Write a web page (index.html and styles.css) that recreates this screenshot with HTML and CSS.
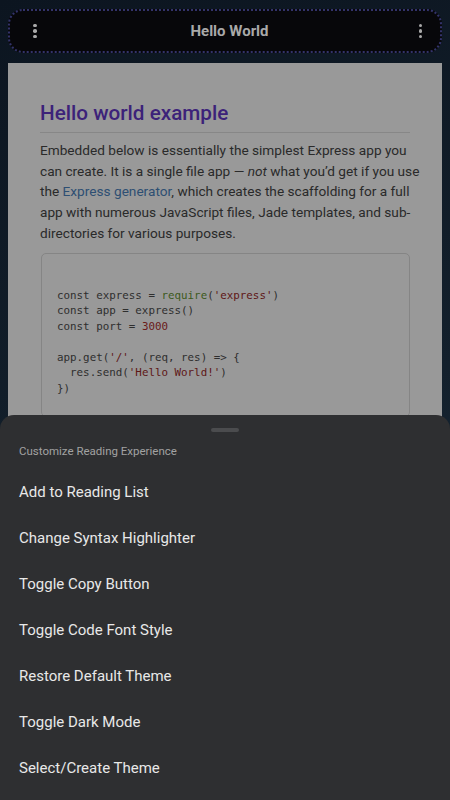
FILE: index.html
```html
<!DOCTYPE html>
<html>
<head>
<meta charset="utf-8">
<link rel="stylesheet" href="styles.css">
</head>
<body>
<div class="screen">
  <header class="topbar">
    <span class="kebab"><i></i><i></i><i></i></span>
    <h1 class="title">Hello World</h1>
    <span class="kebab"><i></i><i></i><i></i></span>
  </header>
  <main class="card">
    <h2 class="heading">Hello world example</h2>
    <p class="para">Embedded below is essentially the simplest Express app you can create. It is a single file app — <em>not</em> what you’d get if you use the <a class="link">Express generator</a>, which creates the scaffolding for a full app with numerous JavaScript files, Jade templates, and sub-directories for various purposes.</p>
    <div class="code">
      <div class="ln">const express = <span class="fn">require</span>(<span class="str">'express'</span>)</div>
      <div class="ln">const app = express()</div>
      <div class="ln">const port = <span class="num">3000</span></div>
      <div class="ln blank"></div>
      <div class="ln">app.get(<span class="str">'/'</span>, (req, res) =&gt; {</div>
      <div class="ln">  res.send(<span class="str">'Hello World!'</span>)</div>
      <div class="ln">})</div>
    </div>
  </main>
  <section class="sheet">
    <div class="handle"></div>
    <div class="sheet-title">Customize Reading Experience</div>
    <ul class="menu">
      <li>Add to Reading List</li>
      <li>Change Syntax Highlighter</li>
      <li>Toggle Copy Button</li>
      <li>Toggle Code Font Style</li>
      <li>Restore Default Theme</li>
      <li>Toggle Dark Mode</li>
      <li>Select/Create Theme</li>
    </ul>
  </section>
</div>
</body>
</html>
```

FILE: styles.css
```css
* { box-sizing: border-box; }
html, body { margin: 0; padding: 0; }
body {
  width: 450px;
  height: 800px;
  overflow: hidden;
  font-family: Roboto, "Liberation Sans", sans-serif;
  background: #0d1620;
}
.screen {
  position: relative;
  width: 450px;
  height: 800px;
  overflow: hidden;
  background: linear-gradient(160deg, #0c1520 0%, #13202c 55%, #1b2d3d 100%);
  padding: 9px 8px 0 8px;
}
.topbar {
  height: 44px;
  background: #07070a;
  border: 2px dotted #33336a;
  border-radius: 15px;
  display: flex;
  align-items: center;
  justify-content: space-between;
  padding: 0 17px 0 23px;
}
.kebab {
  display: flex;
  flex-direction: column;
  gap: 2px;
  width: 4px;
}
.kebab i {
  display: block;
  width: 3.5px;
  height: 3.5px;
  border-radius: 50%;
  background: #a9a9a9;
}
.title {
  margin: 0 0 0 3px;
  font-size: 15px;
  font-weight: 700;
  color: #a9a9a9;
}
.card {
  margin-top: 10px;
  background: #999999;
  padding: 36px 32px 0 32px;
  height: 740px;
}
.heading {
  margin: 0;
  font-size: 20.7px;
  font-weight: 500;
  color: #3c2279;
  padding-bottom: 5px;
  border-bottom: 1px solid #878787;
  line-height: 28px;
}
.para {
  margin: 7px -10px 0 0;
  font-size: 13.65px;
  line-height: 20.7px;
  color: #2a2a2a;
}
.para em { font-style: italic; }
.link { color: #2e4f73; }
.code {
  margin: 9px 0 0 1px;
  border: 1px solid #858585;
  border-radius: 5px;
  padding: 34px 15px 20px 15px;
  font-family: "DejaVu Sans Mono", monospace;
  font-size: 10.85px;
  line-height: 15.5px;
  color: #2e2e2e;
}
.ln { white-space: pre; height: 15.5px; }
.fn { color: #3c5a1c; }
.str { color: #5e1616; }
.num { color: #6a1a1a; }
.sheet {
  position: absolute;
  left: 0;
  right: 0;
  bottom: 0;
  height: 385px;
  background: #2e2f31;
  border-radius: 14px 14px 0 0;
  padding: 13px 0 0 19px;
}
.handle {
  width: 28px;
  height: 4px;
  border-radius: 2px;
  background: #4b4c4e;
  margin: 0 auto 0 192px;
}
.sheet-title {
  margin-top: 12px;
  font-size: 11.5px;
  color: #a2a2a2;
  line-height: 14px;
}
.menu {
  list-style: none;
  margin: 11px 0 0 0;
  padding: 0;
}
.menu li {
  height: 46px;
  line-height: 46px;
  font-size: 15px;
  color: #e8e8e8;
}
```
